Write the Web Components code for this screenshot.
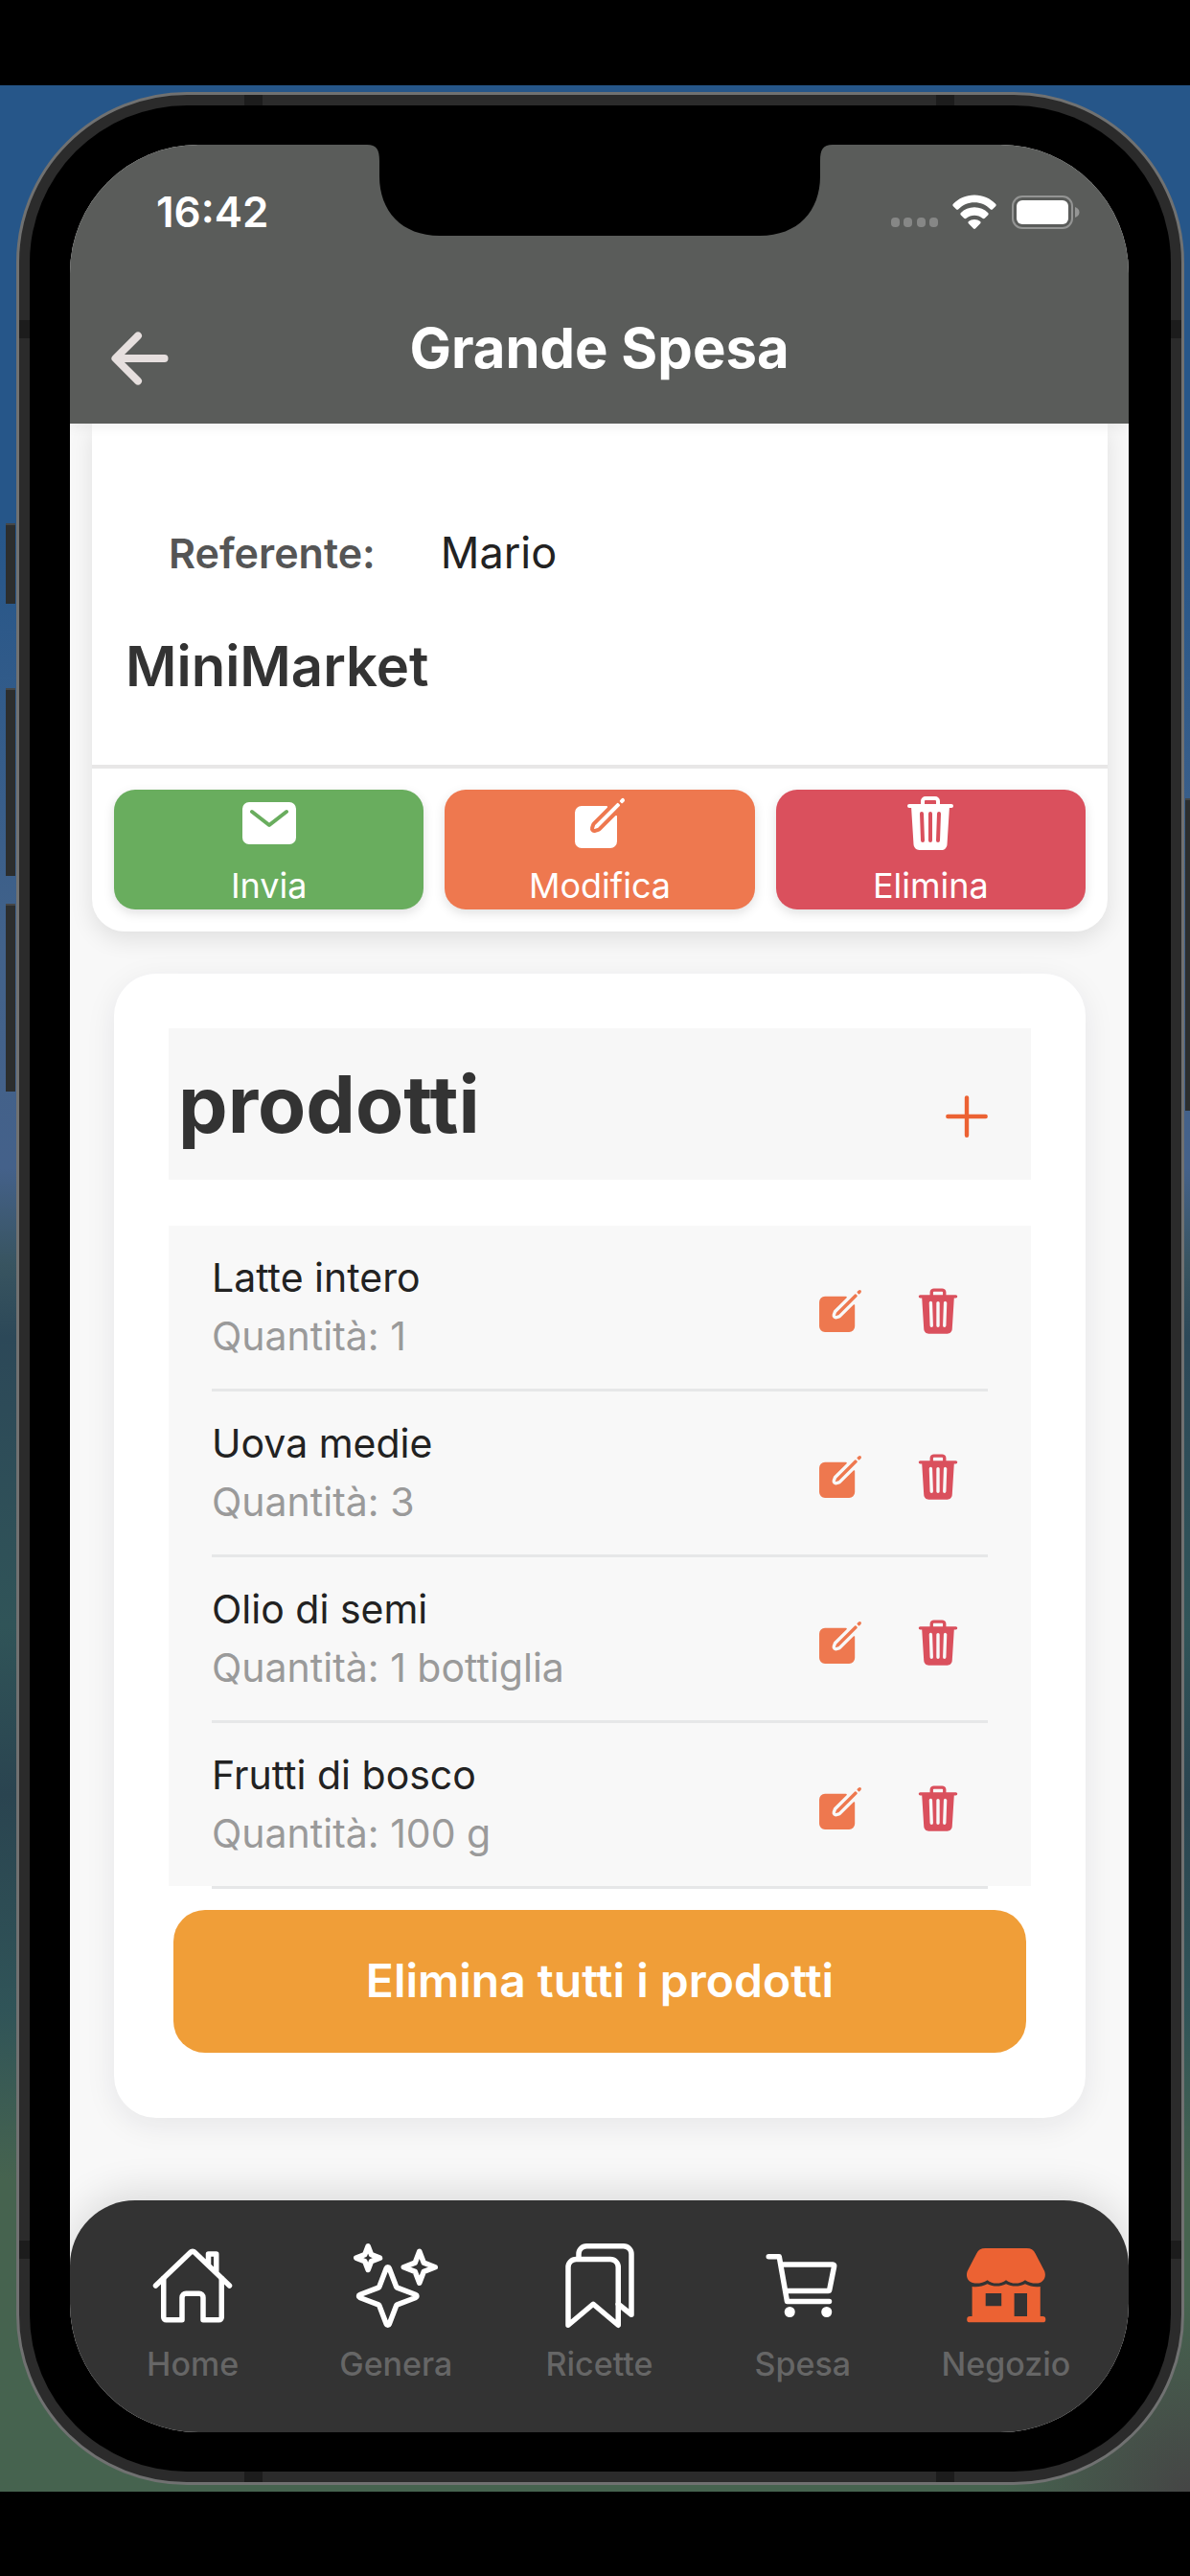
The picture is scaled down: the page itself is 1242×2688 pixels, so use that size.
<!DOCTYPE html>
<html lang="it">
<head>
<meta charset="utf-8">
<meta name="viewport" content="width=device-width, initial-scale=1">
<title>Grande Spesa</title>
<style>
html, body {
    margin: 0;
    padding: 0;
}

body {
    display: flex;
    min-height: 100vh;
    background: #000;
    color: #222;
    font-family: Inter, "Liberation Sans", sans-serif;
}
</style>
</head>
<body>

<desktop-wallpaper>
    <phone-frame>
        <page-header>Grande Spesa</page-header>
        <main-view>
            <store-card contact="Mario">MiniMarket
                <action-button slot="actions" icon="mail" tone="green">Invia</action-button>
                <action-button slot="actions" icon="create" tone="orange">Modifica</action-button>
                <action-button slot="actions" icon="trash" tone="red">Elimina</action-button>
            </store-card>
            <product-card heading="prodotti">
                <product-row quantity="1">Latte intero</product-row>
                <product-row quantity="3">Uova medie</product-row>
                <product-row quantity="1 bottiglia">Olio di semi</product-row>
                <product-row quantity="100 g">Frutti di bosco</product-row>
            </product-card>
        </main-view>
        <tab-bar>
            <tab-link icon="home">Home</tab-link>
            <tab-link icon="sparkles">Genera</tab-link>
            <tab-link icon="bookmarks">Ricette</tab-link>
            <tab-link icon="cart">Spesa</tab-link>
            <tab-link icon="store" active>Negozio</tab-link>
        </tab-bar>
    </phone-frame>
</desktop-wallpaper>

<script>
const icons = {
    back: `<path class="line bold" d="M244 400L100 256l144-144M120 256h292"/>`,
    add: `<path class="line" d="M256 112v288M400 256H112"/>`,
    mail: `<path d="M424 80H88a56 56 0 00-56 56v240a56 56 0 0056 56h336a56 56 0 0056-56V136a56 56 0 00-56-56zm-14.2 92.6l-144 112a16 16 0 01-19.6 0l-144-112a16 16 0 1119.6-25.3L256 251.7l134.2-104.4a16 16 0 0119.6 25.3z"/>`,
    create: `<path d="M459.94 53.25a16.06 16.06 0 00-23.22-.56L424.35 65a8 8 0 000 11.31l11.34 11.32a8 8 0 0011.34 0l12.06-12c6.1-6.09 6.67-16.01.85-22.38zM399.34 90L218.82 270.2a9 9 0 00-2.31 3.93L208.16 299a3.91 3.91 0 004.86 4.86l24.85-8.35a9 9 0 003.93-2.31L422 112.66a9 9 0 000-12.66l-9.95-10a9 9 0 00-12.71 0z"/>
        <path d="M386.34 193.66L264.45 315.79A41.08 41.08 0 01247.58 326l-25.9 8.67a35.92 35.92 0 01-44.33-44.33l8.67-25.9a41.08 41.08 0 0110.19-16.87l122.13-121.91a8 8 0 00-5.65-13.66H104a56 56 0 00-56 56v240a56 56 0 0056 56h240a56 56 0 0056-56V199.31a8 8 0 00-13.66-5.65z"/>`,
    trash: `<path fill-rule="evenodd" d="M432 96h-96V72a40 40 0 00-40-40h-80a40 40 0 00-40 40v24H80a16 16 0 000 32h17l19 304.92c1.42 26.85 22 47.08 48 47.08h184c26.13 0 46.3-19.78 48-47l19-305h17a16 16 0 000-32zM192.57 416H192a16 16 0 01-16-15.43l-8-224a16 16 0 1132-1.14l8 224A16 16 0 01192.57 416zM272 400a16 16 0 01-32 0V176a16 16 0 0132 0zm32-304h-96V72a7.91 7.91 0 018-8h80a7.91 7.91 0 018 8zm32 304.57A16 16 0 01320 416h-.58A16 16 0 01304 399.43l8-224a16 16 0 1132 1.14z"/>`,
    home: `<path class="line" d="M80 212v236a16 16 0 0016 16h96V328a24 24 0 0124-24h80a24 24 0 0124 24v136h96a16 16 0 0016-16V212"/>
        <path class="line" d="M480 256L266.89 52c-5-5.28-16.69-5.34-21.78 0L32 256M400 179V64h-48v69"/>`,
    sparkles: `<path class="line" d="M259.92 262.91L216.4 149.77a9 9 0 00-16.8 0l-43.52 113.14a9 9 0 01-5.17 5.17L37.77 311.6a9 9 0 000 16.8l113.14 43.52a9 9 0 015.17 5.17l43.52 113.14a9 9 0 0016.8 0l43.52-113.14a9 9 0 015.17-5.17l113.14-43.52a9 9 0 000-16.8l-113.14-43.52a9 9 0 01-5.17-5.17z"/>
        <path class="line" d="M108 68L88 16 68 68 16 88l52 20 20 52 20-52 52-20zM426.67 117.33L400 48l-26.67 69.33L304 144l69.33 26.67L400 240l26.67-69.33L496 144z"/>`,
    bookmarks: `<path class="line" d="M128 80V64a48 48 0 0148-48h224a48 48 0 0148 48v368l-80-64"/>
        <path class="line" d="M320 96H112a48 48 0 00-48 48v352l152-128 152 128V144a48 48 0 00-48-48z"/>`,
    cart: `<circle cx="176" cy="416" r="32"/><circle cx="400" cy="416" r="32"/>
        <path class="line" d="M48 80h64l48 272h256M160 288h249.44a8 8 0 007.85-6.43l28.8-144a8 8 0 00-7.85-9.57H128"/>`,
    store: `<path d="M130 29H382c24 0 42 10 52 32l56 108c14 40-12 73-50 73-28 0-48-8-68-20-18 14-38 20-58 20s-42-6-58-20c-16 14-38 20-58 20s-40-6-55-20c-20 12-40 20-70 20-40 0-66-33-52-73l56-108c10-22 28-32 53-32z"/>
        <path fill-rule="evenodd" d="M50 262c32 4 62 0 93-16 36 18 76 18 113 0 38 18 78 18 116 0 30 16 60 20 92 16v180h14a18 18 0 010 37H37a18 18 0 010-37h13zM132 303v76h96v-76zM306 303v139h78V303z"/>`,
    wifi: `<path d="M256 60c100 0 185 40 246 103 8 8 8 20 0 28l-34 34c-8 8-19 8-27 0-49-49-113-78-185-78s-136 29-185 78c-8 8-19 8-27 0l-34-34c-8-8-8-20 0-28C71 100 156 60 256 60z"/>
        <path d="M256 204c62 0 117 24 157 64 8 8 8 19 0 27l-37 36c-7 7-18 7-26 1-26-22-58-34-94-34s-68 12-94 34c-8 6-19 6-26-1l-37-36c-8-8-8-19 0-27 40-40 95-64 157-64z"/>
        <path d="M256 346c26 0 49 8 67 22 8 7 8 17 1 24l-57 58c-6 7-16 7-22 0l-57-58c-7-7-7-17 1-24 18-14 41-22 67-22z"/>`
};

function define(name, css, html) {
    customElements.define(name, class extends HTMLElement {
        connectedCallback() {
            if (this.shadowRoot) return;
            const markup = typeof html === 'function' ? html(this) : html;
            this.attachShadow({ mode: 'open' }).innerHTML = `<style>${css}</style>${markup}`;
        }
    });
}

define('app-icon', `
:host {
    display: block;
    flex: none;
    width: var(--icon-size, 64px);
    height: var(--icon-size, 64px);
}
svg {
    display: block;
    width: 100%;
    height: 100%;
    overflow: visible;
    fill: currentColor;
}
.line {
    fill: none;
    stroke: currentColor;
    stroke-width: 32;
    stroke-linecap: round;
    stroke-linejoin: round;
}
.bold {
    stroke-width: 48;
}
`, el => `<svg viewBox="0 0 512 512" aria-hidden="true">${icons[el.getAttribute('name')]}</svg>`);

define('desktop-wallpaper', `
:host {
    display: flex;
    flex: 1;
    min-width: 0;
    margin: 89px 0;
    padding: 7px 6px 7px 17px;
    background:
        radial-gradient(circle at 100% 100%, #454545 0, transparent 200px),
        linear-gradient(#265689 0, #265689 18%, #42628a 36%, #44618a 45%, #385460 49%,
            #2c4858 52%, #305458 64%, #2a4450 71%, #305458 80%, #46634f 87%);
}
`, `<slot></slot>`);

define('phone-frame', `
:host {
    display: flex;
    flex: 1;
    min-width: 0;
    position: relative;
    box-sizing: border-box;
    border: 3px solid #707171;
    border-radius: 178px;
    background: #2b2b2b;
    padding: 11px;
}
/* hardware keys and antenna bands */
.key {
    position: absolute;
    width: 10px;
    left: -14px;
    background: #2c2e2e;
    border-top: 2px solid #454747;
    box-sizing: border-box;
}
.key.mute { top: 447px; height: 84px; }
.key.up { top: 619px; height: 196px; }
.key.down { top: 844px; height: 196px; }
.key.power { left: auto; right: -14px; top: 734px; height: 326px; }
.band {
    position: absolute;
    background: #1c1c1c;
}
.band.h { width: 19px; height: 11px; }
.band.v { width: 11px; height: 19px; }
.t { top: 0; }
.b { bottom: 0; }
.l { left: 235px; }
.r { right: 237px; }
.v.l { left: 0; }
.v.r { right: 0; }
.v.t { top: 235px; }
.v.b { bottom: 233px; }
.bezel {
    display: flex;
    flex: 1;
    min-width: 0;
    position: relative;
    padding: 41px 44px 41px 42px;
    border-radius: 164px;
    background: #000;
}
.screen {
    display: flex;
    flex: 1;
    flex-direction: column;
    min-width: 0;
    overflow: hidden;
    border-radius: 134px;
    background: #f8f8f8;
}
.notch {
    position: absolute;
    z-index: 2;
    top: 40px;
    left: calc(50% - 244px);
    width: 486px;
    height: 96px;
}
`, `
<i class="key mute"></i><i class="key up"></i><i class="key down"></i><i class="key power"></i>
<i class="band h t l"></i><i class="band h t r"></i><i class="band h b l"></i><i class="band h b r"></i>
<i class="band v t l"></i><i class="band v b l"></i><i class="band v t r"></i><i class="band v b r"></i>
<div class="bezel">
    <div class="screen"><slot></slot></div>
    <svg class="notch" viewBox="0 0 486 96" aria-hidden="true">
        <path d="M0 0H486V1C476 1 473 6 473 18V34C473 70 450 96 410 96H76C36 96 13 70 13 34V18C13 6 10 1 0 1Z"/>
    </svg>
</div>`);

define('page-header', `
:host {
    display: block;
    position: relative;
    z-index: 1;
    background: #5a5c5a;
    color: #fff;
    box-shadow: 0 4px 12px rgba(0, 0, 0, 0.06);
}
.status {
    display: flex;
    align-items: center;
    height: 140px;
    padding: 0 51px 0 90px;
}
time {
    flex: 1;
    font-size: 44px;
    font-weight: 600;
}
.signal {
    width: 50px;
    height: 10px;
    margin: 22px 14px 0 0;
    fill: #868786;
}
.battery {
    width: 71px;
    height: 35px;
    margin-left: 16px;
}
app-icon {
    --icon-size: 46px;
}
.title {
    display: grid;
    grid-template-columns: 84px 1fr 84px;
    align-items: center;
    height: 151px;
    padding: 0 31px;
}
button {
    padding: 14px 0 0;
    border: 0;
    background: none;
    color: #e6dfde;
}
button app-icon {
    --icon-size: 84px;
}
h1 {
    margin: 0 0 8px;
    font-size: 58px;
    font-weight: 700;
    line-height: 72px;
    text-align: center;
}
`, `
<div class="status">
    <time>16:42</time>
    <svg class="signal" viewBox="0 0 50 10" aria-hidden="true">
        <rect width="9" height="10" rx="4"/><rect x="13" width="9" height="10" rx="4"/>
        <rect x="27" width="9" height="10" rx="4"/><rect x="40" width="9" height="10" rx="4"/>
    </svg>
    <app-icon name="wifi"></app-icon>
    <svg class="battery" viewBox="0 0 71 35" aria-hidden="true">
        <rect x="1" y="1" width="62" height="33" rx="10" fill="none" stroke="#949594" stroke-width="2"/>
        <rect x="5" y="5" width="54" height="25" rx="6" fill="#fff"/>
        <path d="M66 12c6 2 6 9 0 11z" fill="#949594"/>
    </svg>
</div>
<div class="title">
    <button type="button" aria-label="Indietro"><app-icon name="back"></app-icon></button>
    <h1><slot></slot></h1>
</div>`);

define('main-view', `
:host {
    display: block;
    flex: 1;
}
`, `<slot></slot>`);

define('store-card', `
:host {
    display: block;
    margin: 0 22px 0 23px;
    border-radius: 0 0 34px 34px;
    background: #fff;
    box-shadow: 0 8px 24px rgba(0, 0, 0, 0.1);
}
.info {
    padding: 105px 35px 67px;
}
dl {
    display: flex;
    gap: 68px;
    margin: 0 45px 52px;
    line-height: 60px;
}
dt {
    color: #555;
    font-size: 43px;
    font-weight: 600;
}
dd {
    margin: 0;
    font-size: 45px;
}
h2 {
    margin: 0;
    color: #333;
    font-size: 58px;
    font-weight: 600;
    line-height: 72px;
}
.actions {
    display: flex;
    gap: 22px;
    padding: 22px 23px 23px;
    border-top: 4px solid #e8e7e7;
}
`, el => `
<div class="info">
    <dl><dt>Referente:</dt><dd>${el.getAttribute('contact')}</dd></dl>
    <h2><slot></slot></h2>
</div>
<div class="actions"><slot name="actions"></slot></div>`);

define('action-button', `
:host {
    display: block;
    flex: 1;
}
:host([tone=green]) { --tone: #69ad5e; }
:host([tone=orange]) { --tone: #ee784f; }
:host([tone=red]) { --tone: #da505d; }
button {
    display: flex;
    flex-direction: column;
    align-items: center;
    gap: 11px;
    width: 100%;
    padding: 3px 0;
    border: 0;
    border-radius: 22px;
    background: var(--tone);
    box-shadow: 0 4px 12px rgba(0, 0, 0, 0.12);
    color: #fff;
    font: 400 36px/44px Inter, "Liberation Sans", sans-serif;
}
`, el => `<button type="button"><app-icon name="${el.getAttribute('icon')}"></app-icon><slot></slot></button>`);

define('product-card', `
:host {
    display: block;
    margin: 44px 45px 86px 46px;
    padding: 57px 57px 68px;
    border-radius: 44px;
    background: #fff;
    box-shadow: 0 8px 32px rgba(20, 30, 50, 0.08);
}
header {
    display: flex;
    align-items: center;
    justify-content: space-between;
    margin-bottom: 48px;
    padding: 32px 32px 30px 10px;
    background: #f7f7f7;
}
h2 {
    margin: 0;
    color: #333;
    font-size: 82px;
    font-weight: 700;
    line-height: 96px;
}
.add {
    padding: 24px 0 0;
    border: 0;
    background: none;
    color: #ec6233;
}
.add app-icon {
    --icon-size: 70px;
}
.list {
    padding: 0 45px;
    background: linear-gradient(#f8f8f8, #f8f8f8) no-repeat 0 0 / 100% calc(100% - 3px);
}
.clear {
    display: block;
    width: calc(100% - 10px);
    margin: 22px 5px 0;
    padding: 43px 0 45px;
    border: 0;
    border-radius: 33px;
    background: #f09e38;
    color: #fff;
    font: 600 48px/61px Inter, "Liberation Sans", sans-serif;
}
`, el => `
<header>
    <h2>${el.getAttribute('heading')}</h2>
    <button class="add" type="button" aria-label="Aggiungi"><app-icon name="add"></app-icon></button>
</header>
<div class="list" role="list"><slot></slot></div>
<button class="clear" type="button">Elimina tutti i prodotti</button>`);

define('product-row', `
:host {
    display: flex;
    align-items: center;
    padding: 24px 22px 24px 0;
    border-bottom: 3px solid #e6e7e8;
    font-size: 41px;
    line-height: 61px;
}
.text {
    flex: 1;
}
.quantity {
    color: #9a9a9a;
}
button {
    display: block;
    margin: 8px 0 0 42px;
    padding: 0 3px;
    border: 0;
    background: none;
    --icon-size: 54px;
}
.edit { color: #ee784f; }
.delete { color: #da505d; }
`, el => `
<div class="text">
    <div class="name"><slot></slot></div>
    <div class="quantity">Quantità: ${el.getAttribute('quantity')}</div>
</div>
<button class="edit" type="button" aria-label="Modifica"><app-icon name="create"></app-icon></button>
<button class="delete" type="button" aria-label="Elimina"><app-icon name="trash"></app-icon></button>`);

define('tab-bar', `
:host {
    display: block;
    border-radius: 68px 68px 0 0;
    background: #333;
    box-shadow: 0 -8px 40px rgba(0, 0, 0, 0.12);
}
nav {
    display: flex;
    padding: 45px 22px 51px;
}
`, `<nav><slot></slot></nav>`);

define('tab-link', `
:host {
    display: block;
    flex: 1;
}
a {
    display: flex;
    flex-direction: column;
    align-items: center;
    gap: 18px;
    color: #666;
    font-size: 34px;
    font-weight: 500;
    line-height: 40px;
    text-decoration: none;
}
app-icon {
    --icon-size: 88px;
    color: #fff;
}
:host([active]) app-icon {
    color: #ec6233;
}
`, el => `<a href="#${el.getAttribute('icon')}"><app-icon name="${el.getAttribute('icon')}"></app-icon><slot></slot></a>`);
</script>
</body>
</html>
